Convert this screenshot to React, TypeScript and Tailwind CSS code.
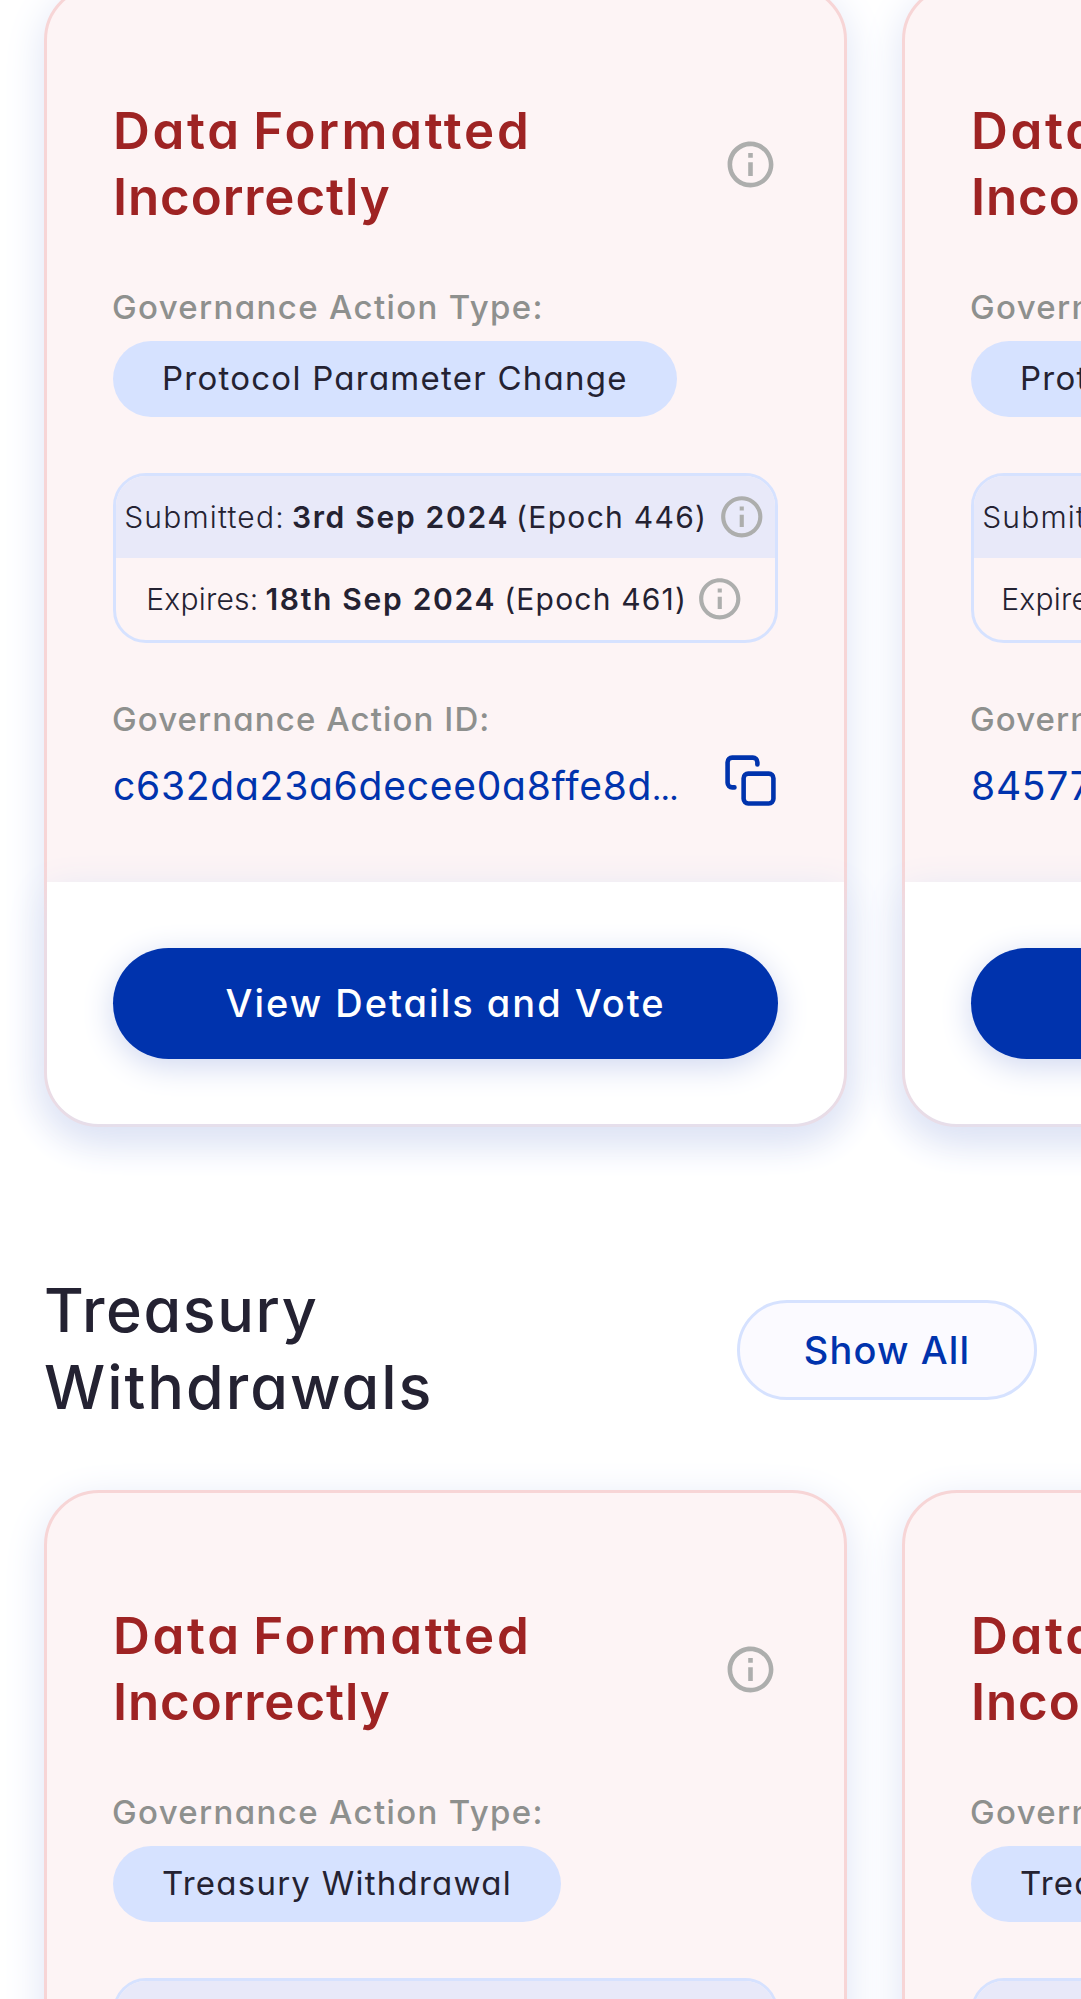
import type { ReactNode } from 'react';

type Action = {
  type: string;
  submitted: string;
  submittedEpoch: string;
  expires: string;
  expiresEpoch: string;
  id: string;
};

function InfoIcon({ className }: { className: string }) {
  return (
    <svg viewBox="0 0 24 24" fill="#ADAEAD" className={`shrink-0 ${className}`}>
      <path d="M11 7h2v2h-2zm0 4h2v6h-2zm1-9C6.48 2 2 6.48 2 12s4.48 10 10 10 10-4.48 10-10S17.52 2 12 2m0 18c-4.41 0-8-3.59-8-8s3.59-8 8-8 8 3.59 8 8-3.59 8-8 8" />
    </svg>
  );
}

function CopyIcon() {
  return (
    <svg
      viewBox="0 0 24 24"
      fill="none"
      stroke="#0033AD"
      strokeWidth="2"
      strokeLinecap="round"
      strokeLinejoin="round"
      className="size-[55px] shrink-0"
    >
      <rect x="9" y="9" width="13" height="13" rx="2" />
      <path d="M5 15H4a2 2 0 0 1-2-2V4a2 2 0 0 1 2-2h9a2 2 0 0 1 2 2v1" />
    </svg>
  );
}

function Label({ children, className }: { children: ReactNode; className: string }) {
  return (
    <p className={`text-[33px] leading-[44px] font-medium whitespace-nowrap text-[#8E908E] ${className}`}>
      {children}
    </p>
  );
}

function Card({ action }: { action: Action }) {
  return (
    <article className="flex h-[1142px] w-[803px] shrink-0 flex-col rounded-[55px] border-[3px] border-[#F7D5D6] bg-[#FDF4F5] shadow-[0_11px_41px_#DDE3F5]">
      <div className="flex flex-1 flex-col px-[66px] pt-[110px]">
        <div className="flex items-center justify-between">
          <h3 className="text-[51px] leading-[66px] font-semibold whitespace-nowrap text-[#9E2323]">
            <span className="block tracking-[2.7px] [word-spacing:-4px]">Data Formatted</span>
            <span className="block tracking-[0.9px]">Incorrectly</span>
          </h3>
          <InfoIcon className="size-[55px]" />
        </div>

        <Label className="mt-[55px] -ml-px tracking-[1.35px]">Governance Action Type:</Label>
        <div className="mt-3 flex h-[76px] items-center self-start rounded-full bg-[#D6E2FF] px-[49px] text-[33px] tracking-[1.25px] whitespace-nowrap text-[#242232]">
          {action.type}
        </div>

        <div className="mt-14 h-[170px] overflow-hidden rounded-[33px] border-[3px] border-[#D6E2FF] text-[30px] whitespace-nowrap text-[#242232]">
          <div className="flex h-[82px] items-center justify-center bg-[#E8E9F9]">
            <span className="font-light tracking-[1.2px]">Submitted:</span>
            <span className="ml-[7px] font-semibold tracking-[1.7px]">{action.submitted}</span>
            <span className="ml-[7px] tracking-[1.3px]">{action.submittedEpoch}</span>
            <InfoIcon className="ml-2.5 size-[49.5px]" />
          </div>
          <div className="flex h-[82px] items-center justify-center">
            <span className="font-light tracking-[0.2px]">Expires:</span>
            <span className="ml-[7px] font-semibold tracking-[1.7px]">{action.expires}</span>
            <span className="ml-2 tracking-[1.2px]">{action.expiresEpoch}</span>
            <InfoIcon className="ml-2 size-[49.5px]" />
          </div>
        </div>

        <Label className="mt-[54px] -ml-px tracking-[1.1px]">Governance Action ID:</Label>
        <div className="mt-3 flex items-start justify-between">
          <p className="pt-1 text-[39px] leading-[58px] whitespace-nowrap text-[#0033AD]">
            <span className="tracking-[0.75px]">{action.id}</span>
            <span className="text-[26px] font-bold">…</span>
          </p>
          <CopyIcon />
        </div>
      </div>

      <div className="h-[242px] rounded-b-[52px] bg-white px-[66px] pt-[66px] shadow-[0_11px_41px_#DDE3F5]">
        <button className="flex h-[111px] w-full items-center justify-center rounded-full bg-[#0033AD] text-[38px] font-medium tracking-[2px] whitespace-nowrap text-white shadow-[0_7px_32px_#CFD7F0]">
          View Details and Vote
        </button>
      </div>
    </article>
  );
}

function CardRow({ actions }: { actions: Action[] }) {
  return (
    <div className="flex gap-[55px] pl-11">
      {actions.map((action) => (
        <Card key={action.id} action={action} />
      ))}
    </div>
  );
}

const first = {
  submitted: '3rd Sep 2024',
  submittedEpoch: '(Epoch 446)',
  expires: '18th Sep 2024',
  expiresEpoch: '(Epoch 461)',
  id: 'c632da23a6decee0a8ffe8d',
};

const second = {
  submitted: '3rd Sep 2024',
  submittedEpoch: '(Epoch 446)',
  expires: '18th Sep 2024',
  expiresEpoch: '(Epoch 462)',
  id: '84577e0a91c2b6d05f3ae71',
};

export default function App() {
  return (
    <main className="h-[1999px] w-[1081px] overflow-hidden bg-white font-['Inter',sans-serif] [font-feature-settings:'cv11']">
      <div className="-mt-[15px]">
        <CardRow
          actions={[
            { ...first, type: 'Protocol Parameter Change' },
            { ...second, type: 'Protocol Parameter Change' },
          ]}
        />
        <header className="flex h-[363px] items-start justify-between pt-[145px] pr-11 pl-11">
          <h2 className="text-[61px] leading-[77px] font-medium text-[#242232]">
            <span className="block tracking-[1.6px]">Treasury</span>
            <span className="block tracking-[2px]">Withdrawals</span>
          </h2>
          <button className="mt-7 flex h-[100px] w-[300px] items-center justify-center rounded-full border-[3px] border-[#D6E2FF] bg-[#FBFAFF] text-[38px] font-medium tracking-[1.1px] text-[#0033AD]">
            Show All
          </button>
        </header>
        <CardRow
          actions={[
            { ...first, type: 'Treasury Withdrawal' },
            { ...second, type: 'Treasury Withdrawal' },
          ]}
        />
      </div>
    </main>
  );
}
